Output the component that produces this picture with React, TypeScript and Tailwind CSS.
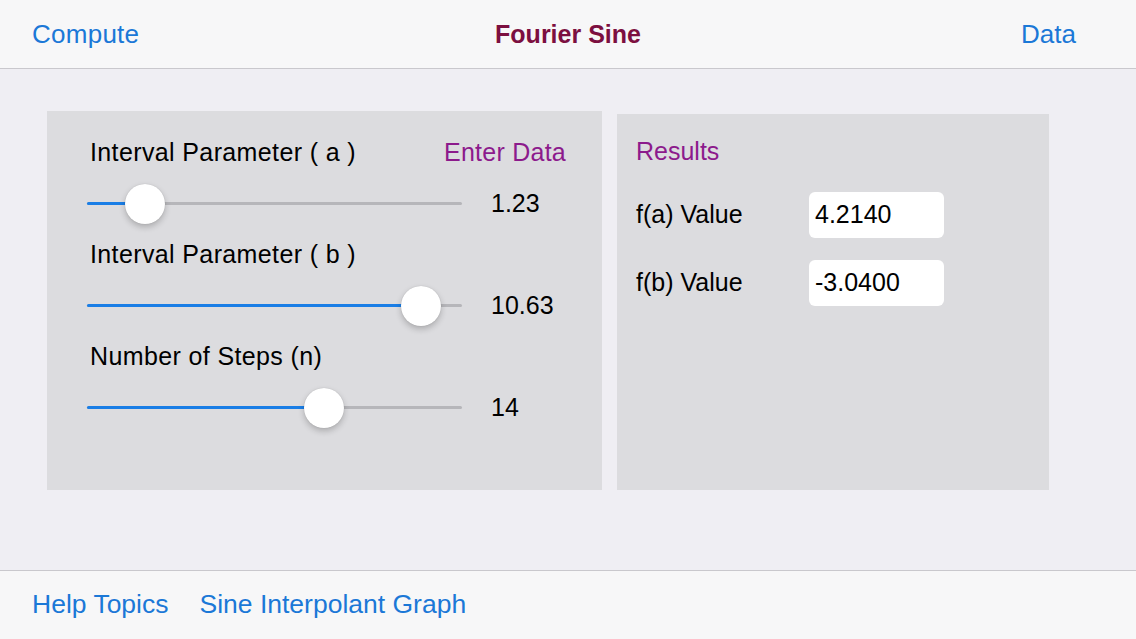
import React from "react";

const font = { fontFamily: '"Liberation Sans", Arial, sans-serif' };

function Slider({ pos, value }: { pos: number; value: string }) {
  return (
    <div className="flex h-[51px] items-center pl-[40px]">
      <div className="relative h-[3px] w-[375px] rounded-full bg-[#b6b6ba]">
        <div className="absolute left-0 top-0 h-[3px] rounded-full bg-[#1a7ee6]" style={{ width: pos }} />
        <div
          className="absolute top-1/2 h-[40px] w-[40px] -translate-x-1/2 -translate-y-1/2 rounded-full bg-white shadow-[0_3px_6px_rgba(0,0,0,0.22),0_0_1px_rgba(0,0,0,0.2)]"
          style={{ left: pos }}
        />
      </div>
      <span className="ml-[29px] text-[25px] text-black">{value}</span>
    </div>
  );
}

export default function App() {
  return (
    <div className="flex h-[639px] w-[1136px] flex-col bg-[#efeef3]" style={font}>
      <header className="grid h-[69px] shrink-0 grid-cols-[1fr_auto_1fr] items-center border-b border-[#c9c8cd] bg-[#f7f7f8] pt-[1px]">
        <span className="pl-[32px] text-[26px] tracking-[0.01em] text-[#1b78d7]">Compute</span>
        <span className="text-[25px] font-bold text-[#7c0f40]">Fourier Sine</span>
        <span className="pr-[60px] text-right text-[26px] text-[#1b78d7]">Data</span>
      </header>

      <main className="flex flex-1 items-end gap-[15px] pb-[80px] pl-[47px]">
        <section className="h-[379px] w-[555px] bg-[#dcdcdf] pt-[16px]">
          <div className="flex h-[51px] items-center justify-between pl-[43px] pr-[36px]">
            <span className="text-[25px] tracking-[0.015em] text-black">Interval Parameter ( a )</span>
            <span className="text-[25px] tracking-[0.01em] text-[#8c1a8c]">Enter Data</span>
          </div>
          <Slider pos={58} value="1.23" />
          <div className="flex h-[51px] items-center pl-[43px]">
            <span className="text-[25px] tracking-[0.015em] text-black">Interval Parameter ( b )</span>
          </div>
          <Slider pos={334} value="10.63" />
          <div className="flex h-[51px] items-center pl-[43px]">
            <span className="text-[25px] tracking-[0.015em] text-black">Number of Steps (n)</span>
          </div>
          <Slider pos={237} value="14" />
        </section>

        <section className="h-[376px] w-[432px] bg-[#dcdcdf] pl-[19px] pt-[22px]">
          <div className="h-[30px] text-[25px] leading-[30px] text-[#8c1a8c]">Results</div>
          <div className="mt-[26px] flex items-center">
            <span className="w-[173px] text-[25px] text-black">f(a) Value</span>
            <div className="flex h-[46px] w-[135px] items-center rounded-[6px] bg-white pl-[6px] text-[25px] text-black">
              4.2140
            </div>
          </div>
          <div className="mt-[22px] flex items-center">
            <span className="w-[173px] text-[25px] text-black">f(b) Value</span>
            <div className="flex h-[46px] w-[135px] items-center rounded-[6px] bg-white pl-[6px] text-[25px] text-black">
              -3.0400
            </div>
          </div>
        </section>
      </main>

      <footer className="flex h-[69px] shrink-0 items-center gap-[31px] border-t border-[#c9c8cd] bg-[#f7f7f8] pl-[32px]">
        <span className="text-[26.5px] text-[#1b78d7]">Help Topics</span>
        <span className="text-[26.5px] text-[#1b78d7]">Sine Interpolant Graph</span>
      </footer>
    </div>
  );
}
